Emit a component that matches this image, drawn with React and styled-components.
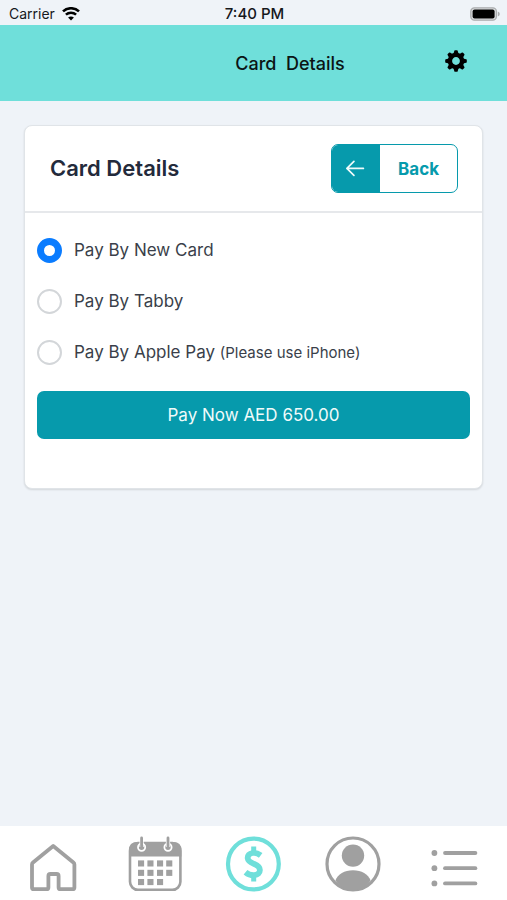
import React, { useState } from 'react';
import styled, { createGlobalStyle } from 'styled-components';

const GlobalStyle = createGlobalStyle`
  * {
    box-sizing: border-box;
  }

  body {
    margin: 0;
    background-color: #eff3f8;
    color: #3a3f4a;
    font-family: Inter, 'Liberation Sans', sans-serif;
  }

  button, input {
    font-family: inherit;
  }
`;

const Page = styled.div`
  min-height: 100vh;
  display: flex;
  flex-direction: column;
`;

const StatusBar = styled.div`
  height: 25px;
  padding: 2px 7px 0 9px;
  display: grid;
  grid-template-columns: 1fr auto 1fr;
  align-items: center;
  color: #16181c;
  font-size: 14px;
  line-height: 20px;
`;

const Carrier = styled.span`
  display: flex;
  align-items: center;
  gap: 7px;
`;

const Clock = styled.span`
  font-size: 15px;
  font-weight: 500;
`;

const BatteryIcon = styled.svg`
  justify-self: end;
`;

const TopBar = styled.header`
  height: 76px;
  padding: 0 40px 4px 135px;
  display: flex;
  align-items: center;
  background-color: #6fdfda;
`;

const TopTitle = styled.h1`
  flex: 1;
  margin: 0;
  padding-top: 6px;
  color: #0b1414;
  font-size: 18px;
  font-weight: 500;
  line-height: 24px;
  text-align: center;
  white-space: pre;
`;

const IconButton = styled.button`
  display: flex;
  padding: 0;
  border: none;
  background: none;
  color: #000;
  cursor: pointer;
`;

const Content = styled.main`
  flex: 1;
  padding: 24px;
`;

const Card = styled.section`
  background-color: white;
  border: 1px solid #e0e4e8;
  border-radius: 8px;
  box-shadow: 0 1px 2px rgba(0, 0, 0, 0.12);
`;

const CardHeader = styled.div`
  height: 87px;
  padding: 0 24px 0 25px;
  display: flex;
  align-items: center;
  justify-content: space-between;
  border-bottom: 2px solid #e6e8eb;
`;

const CardTitle = styled.h2`
  margin: 0;
  padding-bottom: 2px;
  color: #232a3b;
  font-size: 22px;
  font-weight: 600;
  line-height: 28px;
`;

const BackButton = styled.button`
  height: 49px;
  padding: 0;
  display: flex;
  align-items: stretch;
  overflow: hidden;
  border: 1px solid #069aac;
  border-radius: 7px;
  background-color: white;
  color: #069aac;
  font-size: 17px;
  font-weight: 700;
  cursor: pointer;
`;

const BackIcon = styled.span`
  width: 48px;
  display: flex;
  align-items: center;
  justify-content: center;
  background-color: #069aac;
`;

const BackText = styled.span`
  padding: 0 18px;
  display: flex;
  align-items: center;
`;

const CardBody = styled.div`
  padding: 25px 12px 49px;
`;

const Options = styled.div`
  display: flex;
  flex-direction: column;
  gap: 26px;
`;

const Option = styled.label`
  display: flex;
  align-items: center;
  gap: 12px;
  font-size: 17px;
  line-height: 25px;
  cursor: pointer;
`;

const Radio = styled.input`
  appearance: none;
  flex: none;
  width: 25px;
  height: 25px;
  margin: 0;
  border: 2px solid #d3d6d9;
  border-radius: 50%;
  background-color: white;

  &:checked {
    border: 7px solid #0a7cff;
  }
`;

const Note = styled.small`
  font-size: 15px;
`;

const PayButton = styled.button`
  width: 100%;
  height: 48px;
  margin-top: 26px;
  border: none;
  border-radius: 7px;
  background-color: #069aac;
  color: #effafa;
  font-size: 17px;
  cursor: pointer;
`;

const TabBar = styled.nav`
  height: 74px;
  padding: 2px 3px 0;
  display: grid;
  grid-template-columns: repeat(5, 1fr);
  align-items: center;
  background-color: white;
`;

const Tab = styled.a`
  display: flex;
  justify-content: center;
  color: ${(props) => (props.$active ? '#6fdfda' : '#a0a0a0')};
`;

const TabIcon = ({ viewBox = '0 0 56 56', children }) => (
  <svg width="56" height="56" viewBox={viewBox} overflow="visible" fill="none" stroke="currentColor" aria-hidden="true">
    {children}
  </svg>
);

const HomeIcon = () => (
  <TabIcon>
    <path
      d="M28.2 10 L8 26.4 Q7 27.2 7 28.6 V51.4 Q7 53.2 8.8 53.2 H21.6 Q23.4 53.2 23.4 51.4 V40 Q23.4 38 25.4 38 H31.6 Q33.6 38 33.6 40 V51.4 Q33.6 53.2 35.4 53.2 H47.6 Q49.4 53.2 49.4 51.4 V28.6 Q49.4 27.2 48.4 26.4 Z"
      strokeWidth="3.8"
      strokeLinejoin="round"
    />
  </TabIcon>
);

const CalendarIcon = () => (
  <TabIcon viewBox="-2 0 56 56">
    <rect x="3" y="7" width="50.4" height="46.8" rx="8" strokeWidth="2.6" />
    <path d="M2 20.5 V14 Q2 6 10 6 H46.4 Q54.4 6 54.4 14 V20.5 Z" fill="currentColor" stroke="none" />
    {[14.6, 41].map((x) => (
      <g key={x}>
        <circle cx={x} cy="11.2" r="3.6" fill="currentColor" stroke="#fff" strokeWidth="1.8" />
        <path d={`M${x} 1.5 V11`} stroke="#fff" strokeWidth="4.2" />
        <path d={`M${x} 2 V11`} strokeWidth="2.8" strokeLinecap="round" />
      </g>
    ))}
    {[24.4, 33.8, 43].map((y, row) =>
      [11, 20.4, 30, 39.2].slice(0, row === 2 ? 3 : 4).map((x) => (
        <rect key={`${x}-${y}`} x={x} y={y} width="6.1" height="6.1" fill="currentColor" stroke="none" />
      ))
    )}
  </TabIcon>
);

const DollarIcon = () => (
  <TabIcon>
    <circle cx="28.4" cy="28" r="25.4" strokeWidth="4.2" />
    <path d="M28.7 10.5 V17 M28.7 39 V45.5" strokeWidth="5" />
    <path
      d="M35.7 19.4 C33.1 17.4 30.1 16.6 27.4 17 C24.3 17.5 22.5 19.5 22.7 22.2 C23 25.4 26.1 26.6 29.3 28 C32.5 29.4 34.9 30.8 34.9 34 C34.9 37 32.7 38.9 29.3 39.2 C26.1 39.4 23.1 38.4 20.5 36.2"
      strokeWidth="5.8"
    />
  </TabIcon>
);

const ProfileIcon = () => (
  <TabIcon viewBox="1 0 56 56">
    <circle cx="28" cy="28" r="26" strokeWidth="3.2" />
    <circle cx="28" cy="19.6" r="11.2" fill="currentColor" stroke="none" />
    <path d="M10.4 44.6 C12.8 38 19.4 34.2 28 34.2 C36.6 34.2 43.2 38 45.6 44.6 C41.2 51 35 54.2 28 54.2 C21 54.2 14.8 51 10.4 44.6 Z" fill="currentColor" stroke="none" />
  </TabIcon>
);

const MenuIcon = () => (
  <TabIcon>
    {[17, 32.2, 47.4].map((y) => (
      <g key={y}>
        <circle cx="8.4" cy={y} r="2.9" fill="currentColor" stroke="none" />
        <path d={`M19 ${y} H49.4`} strokeWidth="3.8" strokeLinecap="round" />
      </g>
    ))}
  </TabIcon>
);

const GearIcon = () => (
  <svg width="22" height="22" viewBox="-11 -11 22 22" aria-hidden="true">
    <circle r="6.1" fill="none" stroke="currentColor" strokeWidth="4.4" />
    {[0, 45, 90, 135, 180, 225, 270, 315].map((angle) => (
      <path key={angle} d="M-2.6 -7 L-1.7 -10.2 Q-1.5 -10.8 -0.9 -10.8 H0.9 Q1.5 -10.8 1.7 -10.2 L2.6 -7 Z" fill="currentColor" transform={`rotate(${angle})`} />
    ))}
  </svg>
);

const tabs = [
  { id: 'home', label: 'Home', Icon: HomeIcon },
  { id: 'calendar', label: 'Calendar', Icon: CalendarIcon },
  { id: 'payments', label: 'Payments', Icon: DollarIcon },
  { id: 'profile', label: 'Profile', Icon: ProfileIcon },
  { id: 'menu', label: 'Menu', Icon: MenuIcon },
];

const methods = [
  { id: 'card', label: 'Pay By New Card' },
  { id: 'tabby', label: 'Pay By Tabby' },
  { id: 'apple', label: 'Pay By Apple Pay', note: '(Please use iPhone)' },
];

function App() {
  const [method, setMethod] = useState('card');

  return (
    <Page>
      <GlobalStyle />
      <StatusBar>
        <Carrier>
          Carrier
          <svg width="18" height="14" viewBox="0 0 18 14" fill="none" stroke="#000" aria-hidden="true">
            <path d="M1 4.4 C5.4 0.2 12.6 0.2 17 4.4" strokeWidth="2.6" />
            <path d="M3.9 7.7 C6.8 5 11.2 5 14.1 7.7" strokeWidth="2.5" />
            <path d="M9 13.4 L6.1 10.5 C7.8 9.1 10.2 9.1 11.9 10.5 Z" fill="#000" stroke="none" />
          </svg>
        </Carrier>
        <Clock>7:40 PM</Clock>
        <BatteryIcon width="30" height="14" viewBox="0 0 30 14" aria-hidden="true">
          <rect x="0.8" y="0.8" width="25.6" height="12.4" rx="3.6" fill="#dcdee0" stroke="#a9abad" strokeWidth="1.3" />
          <rect x="2.6" y="2.5" width="22" height="9" rx="2" fill="#000" />
          <path d="M27.8 4.6 Q29.8 5.4 29.8 7 Q29.8 8.6 27.8 9.4 Z" fill="#a9abad" />
        </BatteryIcon>
      </StatusBar>

      <TopBar>
        <TopTitle>{'Card  Details'}</TopTitle>
        <IconButton type="button" aria-label="Settings">
          <GearIcon />
        </IconButton>
      </TopBar>

      <Content>
        <Card>
          <CardHeader>
            <CardTitle>Card Details</CardTitle>
            <BackButton type="button">
              <BackIcon>
                <svg width="20" height="18" viewBox="0 0 20 18" fill="none" stroke="#effafa" strokeWidth="1.7" strokeLinecap="round" strokeLinejoin="round" aria-hidden="true">
                  <path d="M17.4 8.4 H0.9 M7.9 1.4 L0.9 8.4 L7.9 15.4" />
                </svg>
              </BackIcon>
              <BackText>Back</BackText>
            </BackButton>
          </CardHeader>
          <CardBody>
            <Options role="radiogroup" aria-label="Payment method">
              {methods.map((item) => (
                <Option key={item.id}>
                  <Radio
                    type="radio"
                    name="method"
                    value={item.id}
                    checked={method === item.id}
                    onChange={() => setMethod(item.id)}
                  />
                  <span>
                    {item.label} {item.note && <Note>{item.note}</Note>}
                  </span>
                </Option>
              ))}
            </Options>
            <PayButton type="button">Pay Now AED 650.00</PayButton>
          </CardBody>
        </Card>
      </Content>

      <TabBar>
        {tabs.map(({ id, label, Icon }) => (
          <Tab key={id} href={`#${id}`} aria-label={label} $active={id === 'payments'}>
            <Icon />
          </Tab>
        ))}
      </TabBar>
    </Page>
  );
}

export default App;
